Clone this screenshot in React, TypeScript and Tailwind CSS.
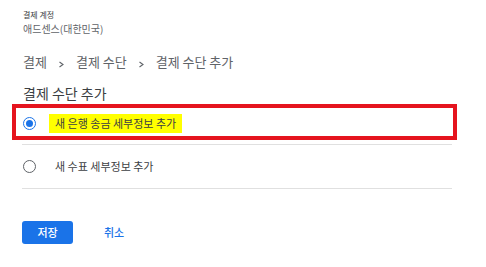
import React, { useState } from 'react';

const font = { fontFamily: '"Noto Sans CJK KR", "Noto Sans", Roboto, sans-serif' };

const Radio: React.FC<{ checked: boolean }> = ({ checked }) => (
  <span
    className={`flex items-center justify-center w-[13px] h-[13px] rounded-full border-[1.5px] ${
      checked ? 'border-[#1a73e8]' : 'border-[#5f6368]'
    }`}
  >
    {checked && <span className="w-[7px] h-[7px] rounded-full bg-[#1a73e8]" />}
  </span>
);

const Chevron = () => (
  <svg width="7" height="7" viewBox="0 0 7 7" className="mx-[11px] mt-[4px] shrink-0">
    <polyline points="1.5,1 5,3.5 1.5,6" fill="none" stroke="#5f6368" strokeWidth="1.1" />
  </svg>
);

export default function App() {
  const [selected, setSelected] = useState<'bank' | 'check'>('bank');

  return (
    <div className="w-[486px] h-[267px] bg-white text-[#3c4043] overflow-hidden" style={font}>
      <div className="pl-[23px] pt-[9px]">
        <div className="text-[8px] leading-[12px] text-[#3c4043]">결제 계정</div>
        <div className="text-[10px] leading-[14px] mt-[1px] text-[#5f6368]">애드센스(대한민국)</div>

        <div className="flex items-center mt-[17px] text-[13px] leading-[18px] text-[#5f6368]">
          <span>결제</span>
          <Chevron />
          <span>결제 수단</span>
          <Chevron />
          <span>결제 수단 추가</span>
        </div>

        <div className="mt-[14px] text-[14px] leading-[17px] text-[#3c4043]">결제 수단 추가</div>
      </div>

      <div className="ml-[22px] w-[430px]">
        <div className="relative">
          <button
            onClick={() => setSelected('bank')}
            className="flex items-center w-full h-[43px] pl-[1px] border-b border-[#e0e0e0] text-left"
          >
            <Radio checked={selected === 'bank'} />
            <span className="ml-[13px] bg-[#ffff00] px-[6px] h-[19px] flex items-center text-[11px] text-[#3c4043]">
              새 은행 송금 세부정보 추가
            </span>
          </button>
          <div className="absolute left-[-10px] right-[-5px] top-[2px] h-[36px] border-[4px] border-[#e5141e] pointer-events-none" />
        </div>
        <button
          onClick={() => setSelected('check')}
          className="flex items-center w-full h-[44px] pl-[1px] border-b border-[#e0e0e0] text-left"
        >
          <Radio checked={selected === 'check'} />
          <span className="ml-[19px] text-[11px] text-[#3c4043]">새 수표 세부정보 추가</span>
        </button>

        <div className="flex items-center mt-[32px]">
          <button className="w-[51px] h-[23px] rounded-[3px] bg-[#1a73e8] text-white text-[11px] font-medium">
            저장
          </button>
          <button className="ml-[31px] text-[11px] text-[#1a73e8] font-medium">취소</button>
        </div>
      </div>
    </div>
  );
}
